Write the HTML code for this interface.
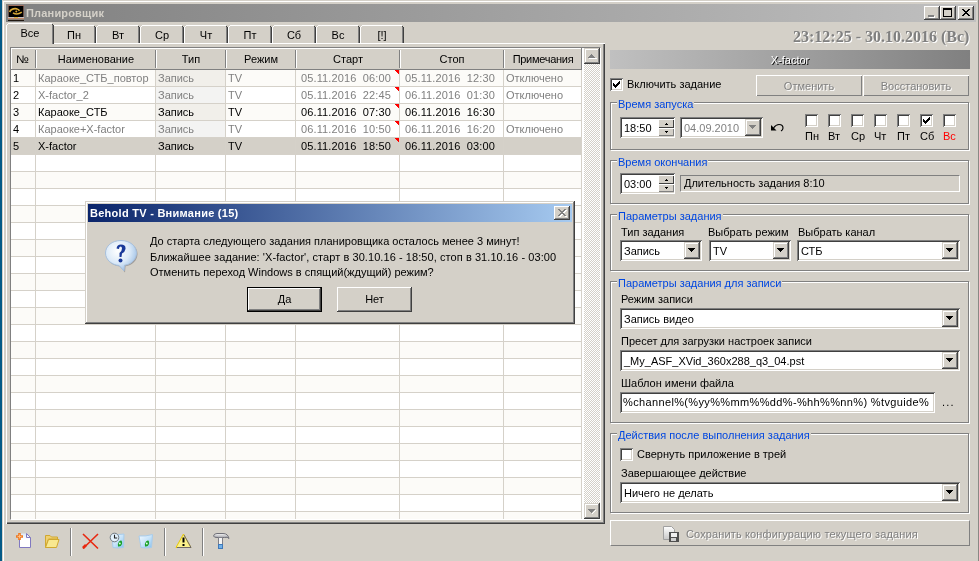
<!DOCTYPE html><html><head><meta charset="utf-8"><style>
*{margin:0;padding:0;box-sizing:border-box}
html,body{width:979px;height:561px;overflow:hidden;background:#d4d0c8;position:relative}
body div{position:absolute}
.t{font:11px/13px "Liberation Sans",sans-serif;white-space:pre;color:#000;will-change:transform}
.b{font-weight:bold}
.g{color:#808080}
.dis{color:#808080;text-shadow:1px 1px 0 #fff}
</style></head><body><div style="left:0px;top:0px;width:2px;height:561px;background:#045a87"></div>
<div style="left:3px;top:1px;width:974px;height:1px;background:#fff"></div>
<div style="left:3px;top:1px;width:1px;height:560px;background:#fff"></div>
<div style="left:978px;top:0px;width:1px;height:561px;background:#8a8884"></div>
<div style="left:6px;top:4px;width:970px;height:18px;background:linear-gradient(to right,#808080,#c0c0c0)"></div>
<svg style="position:absolute;left:8px;top:5px" width="16" height="16" viewBox="0 0 16 16">
<rect x="0" y="0" width="16" height="16" fill="#6a5048"/>
<rect x="0" y="0" width="16" height="1" fill="#a07060"/>
<rect x="1" y="1" width="14" height="11" fill="#000"/>
<rect x="0" y="12" width="16" height="1" fill="#c8c0c0"/>
<rect x="6" y="12" width="4" height="1" fill="#d8b040"/>
<rect x="0" y="13" width="16" height="1" fill="#c08868"/>
<rect x="0" y="14" width="16" height="1" fill="#8a8078"/>
<rect x="0" y="15" width="16" height="1" fill="#201810"/>
<path d="M1.6 7 Q3.5 3.2 8.5 3.8 Q10.5 4.3 11.5 5.8" stroke="#d8a838" stroke-width="1.7" fill="none"/>
<path d="M5 7.8 Q9 10.5 13.8 7.2" stroke="#d8a838" stroke-width="1.6" fill="none"/>
<circle cx="8.3" cy="6.6" r="1" fill="#d8a838"/>
</svg>
<div class="t b" style="left:26px;top:7px;color:#d4d0c8;letter-spacing:0.18px">Планировщик</div>
<div style="left:924px;top:6px;width:16px;height:14px;box-shadow: inset -1px -1px #404040, inset 1px 1px #ffffff, inset -2px -2px #808080; background:#d4d0c8;"></div>
<div style="left:940px;top:6px;width:16px;height:14px;box-shadow: inset -1px -1px #404040, inset 1px 1px #ffffff, inset -2px -2px #808080; background:#d4d0c8;"></div>
<div style="left:958px;top:6px;width:16px;height:14px;box-shadow: inset -1px -1px #404040, inset 1px 1px #ffffff, inset -2px -2px #808080; background:#d4d0c8;"></div>
<div style="left:928px;top:15px;width:6px;height:2px;background:#808080;box-shadow:1px 1px 0 #fff"></div>
<div style="left:943px;top:8px;width:9px;height:9px;border:1px solid #000;border-top-width:2px"></div>
<svg style="position:absolute;left:962px;top:9px" width="10" height="9" shape-rendering="crispEdges"><path d="M0 0h1v1h-1zM1 0h1v1h-1zM6 0h1v1h-1zM7 0h1v1h-1zM1 1h1v1h-1zM2 1h1v1h-1zM5 1h1v1h-1zM6 1h1v1h-1zM2 2h1v1h-1zM3 2h1v1h-1zM4 2h1v1h-1zM5 2h1v1h-1zM3 3h1v1h-1zM4 3h1v1h-1zM2 4h1v1h-1zM3 4h1v1h-1zM4 4h1v1h-1zM5 4h1v1h-1zM1 5h1v1h-1zM2 5h1v1h-1zM5 5h1v1h-1zM6 5h1v1h-1zM0 6h1v1h-1zM1 6h1v1h-1zM6 6h1v1h-1zM7 6h1v1h-1z" fill="#000"/></svg>
<div style="left:6px;top:43px;width:599px;height:481px;box-shadow: inset 1px 1px #ffffff, inset -1px -1px #404040, inset -2px -2px #808080"></div>
<div style="left:54px;top:25px;width:40px;height:1px;background:#fff"></div>
<div style="left:52px;top:27px;width:1px;height:16px;background:#fff"></div>
<div style="left:53px;top:26px;width:1px;height:1px;background:#fff"></div>
<div style="left:95px;top:27px;width:1px;height:16px;background:#404040"></div>
<div style="left:94px;top:26px;width:1px;height:1px;background:#404040"></div>
<div style="left:94px;top:27px;width:1px;height:16px;background:#808080"></div>
<div class="t" style="left:52px;top:29px;width:44px;text-align:center;">Пн</div>
<div style="left:98px;top:25px;width:40px;height:1px;background:#fff"></div>
<div style="left:96px;top:27px;width:1px;height:16px;background:#fff"></div>
<div style="left:97px;top:26px;width:1px;height:1px;background:#fff"></div>
<div style="left:139px;top:27px;width:1px;height:16px;background:#404040"></div>
<div style="left:138px;top:26px;width:1px;height:1px;background:#404040"></div>
<div style="left:138px;top:27px;width:1px;height:16px;background:#808080"></div>
<div class="t" style="left:96px;top:29px;width:44px;text-align:center;">Вт</div>
<div style="left:142px;top:25px;width:40px;height:1px;background:#fff"></div>
<div style="left:140px;top:27px;width:1px;height:16px;background:#fff"></div>
<div style="left:141px;top:26px;width:1px;height:1px;background:#fff"></div>
<div style="left:183px;top:27px;width:1px;height:16px;background:#404040"></div>
<div style="left:182px;top:26px;width:1px;height:1px;background:#404040"></div>
<div style="left:182px;top:27px;width:1px;height:16px;background:#808080"></div>
<div class="t" style="left:140px;top:29px;width:44px;text-align:center;">Ср</div>
<div style="left:186px;top:25px;width:40px;height:1px;background:#fff"></div>
<div style="left:184px;top:27px;width:1px;height:16px;background:#fff"></div>
<div style="left:185px;top:26px;width:1px;height:1px;background:#fff"></div>
<div style="left:227px;top:27px;width:1px;height:16px;background:#404040"></div>
<div style="left:226px;top:26px;width:1px;height:1px;background:#404040"></div>
<div style="left:226px;top:27px;width:1px;height:16px;background:#808080"></div>
<div class="t" style="left:184px;top:29px;width:44px;text-align:center;">Чт</div>
<div style="left:230px;top:25px;width:40px;height:1px;background:#fff"></div>
<div style="left:228px;top:27px;width:1px;height:16px;background:#fff"></div>
<div style="left:229px;top:26px;width:1px;height:1px;background:#fff"></div>
<div style="left:271px;top:27px;width:1px;height:16px;background:#404040"></div>
<div style="left:270px;top:26px;width:1px;height:1px;background:#404040"></div>
<div style="left:270px;top:27px;width:1px;height:16px;background:#808080"></div>
<div class="t" style="left:228px;top:29px;width:44px;text-align:center;">Пт</div>
<div style="left:274px;top:25px;width:40px;height:1px;background:#fff"></div>
<div style="left:272px;top:27px;width:1px;height:16px;background:#fff"></div>
<div style="left:273px;top:26px;width:1px;height:1px;background:#fff"></div>
<div style="left:315px;top:27px;width:1px;height:16px;background:#404040"></div>
<div style="left:314px;top:26px;width:1px;height:1px;background:#404040"></div>
<div style="left:314px;top:27px;width:1px;height:16px;background:#808080"></div>
<div class="t" style="left:272px;top:29px;width:44px;text-align:center;">Сб</div>
<div style="left:318px;top:25px;width:40px;height:1px;background:#fff"></div>
<div style="left:316px;top:27px;width:1px;height:16px;background:#fff"></div>
<div style="left:317px;top:26px;width:1px;height:1px;background:#fff"></div>
<div style="left:359px;top:27px;width:1px;height:16px;background:#404040"></div>
<div style="left:358px;top:26px;width:1px;height:1px;background:#404040"></div>
<div style="left:358px;top:27px;width:1px;height:16px;background:#808080"></div>
<div class="t" style="left:316px;top:29px;width:44px;text-align:center;">Вс</div>
<div style="left:362px;top:25px;width:40px;height:1px;background:#fff"></div>
<div style="left:360px;top:27px;width:1px;height:16px;background:#fff"></div>
<div style="left:361px;top:26px;width:1px;height:1px;background:#fff"></div>
<div style="left:403px;top:27px;width:1px;height:16px;background:#404040"></div>
<div style="left:402px;top:26px;width:1px;height:1px;background:#404040"></div>
<div style="left:402px;top:27px;width:1px;height:16px;background:#808080"></div>
<div class="t" style="left:360px;top:29px;width:44px;text-align:center;">[!]</div>
<div style="left:6px;top:23px;width:48px;height:21px;background:#d4d0c8"></div>
<div style="left:8px;top:23px;width:44px;height:1px;background:#fff"></div>
<div style="left:6px;top:25px;width:1px;height:19px;background:#fff"></div>
<div style="left:7px;top:24px;width:1px;height:1px;background:#fff"></div>
<div style="left:53px;top:25px;width:1px;height:19px;background:#404040"></div>
<div style="left:52px;top:24px;width:1px;height:1px;background:#404040"></div>
<div style="left:52px;top:25px;width:1px;height:19px;background:#808080"></div>
<div class="t" style="left:6px;top:27px;width:48px;text-align:center;">Все</div>
<div style="left:10px;top:47px;width:591px;height:473px;background:#fff;border-top:1px solid #808080;border-left:1px solid #808080;border-bottom:1px solid #fff;border-right:1px solid #fff"></div>
<div style="left:11px;top:70px;width:571px;height:16px;background:#fcfbf8"></div>
<div style="left:156px;top:70px;width:69px;height:16px;background:#f1efea"></div>
<div style="left:11px;top:86px;width:571px;height:1px;background:#d5d1c9"></div>
<div style="left:11px;top:87px;width:571px;height:16px;background:#ffffff"></div>
<div style="left:156px;top:87px;width:69px;height:16px;background:#f3f3f2"></div>
<div style="left:11px;top:103px;width:571px;height:1px;background:#d5d1c9"></div>
<div style="left:11px;top:104px;width:571px;height:16px;background:#fcfbf8"></div>
<div style="left:156px;top:104px;width:69px;height:16px;background:#f1efea"></div>
<div style="left:11px;top:120px;width:571px;height:1px;background:#d5d1c9"></div>
<div style="left:11px;top:121px;width:571px;height:16px;background:#ffffff"></div>
<div style="left:156px;top:121px;width:69px;height:16px;background:#f3f3f2"></div>
<div style="left:11px;top:137px;width:571px;height:1px;background:#d5d1c9"></div>
<div style="left:11px;top:138px;width:571px;height:16px;background:#d4d0c8"></div>
<div style="left:11px;top:154px;width:571px;height:1px;background:#d5d1c9"></div>
<div style="left:11px;top:155px;width:571px;height:16px;background:#ffffff"></div>
<div style="left:11px;top:171px;width:571px;height:1px;background:#d5d1c9"></div>
<div style="left:11px;top:172px;width:571px;height:16px;background:#fcfbf8"></div>
<div style="left:11px;top:188px;width:571px;height:1px;background:#d5d1c9"></div>
<div style="left:11px;top:189px;width:571px;height:16px;background:#ffffff"></div>
<div style="left:11px;top:205px;width:571px;height:1px;background:#d5d1c9"></div>
<div style="left:11px;top:206px;width:571px;height:16px;background:#fcfbf8"></div>
<div style="left:11px;top:222px;width:571px;height:1px;background:#d5d1c9"></div>
<div style="left:11px;top:223px;width:571px;height:16px;background:#ffffff"></div>
<div style="left:11px;top:239px;width:571px;height:1px;background:#d5d1c9"></div>
<div style="left:11px;top:240px;width:571px;height:16px;background:#fcfbf8"></div>
<div style="left:11px;top:256px;width:571px;height:1px;background:#d5d1c9"></div>
<div style="left:11px;top:257px;width:571px;height:16px;background:#ffffff"></div>
<div style="left:11px;top:273px;width:571px;height:1px;background:#d5d1c9"></div>
<div style="left:11px;top:274px;width:571px;height:16px;background:#fcfbf8"></div>
<div style="left:11px;top:290px;width:571px;height:1px;background:#d5d1c9"></div>
<div style="left:11px;top:291px;width:571px;height:16px;background:#ffffff"></div>
<div style="left:11px;top:307px;width:571px;height:1px;background:#d5d1c9"></div>
<div style="left:11px;top:308px;width:571px;height:16px;background:#fcfbf8"></div>
<div style="left:11px;top:324px;width:571px;height:1px;background:#d5d1c9"></div>
<div style="left:11px;top:325px;width:571px;height:16px;background:#ffffff"></div>
<div style="left:11px;top:341px;width:571px;height:1px;background:#d5d1c9"></div>
<div style="left:11px;top:342px;width:571px;height:16px;background:#fcfbf8"></div>
<div style="left:11px;top:358px;width:571px;height:1px;background:#d5d1c9"></div>
<div style="left:11px;top:359px;width:571px;height:16px;background:#ffffff"></div>
<div style="left:11px;top:375px;width:571px;height:1px;background:#d5d1c9"></div>
<div style="left:11px;top:376px;width:571px;height:16px;background:#fcfbf8"></div>
<div style="left:11px;top:392px;width:571px;height:1px;background:#d5d1c9"></div>
<div style="left:11px;top:393px;width:571px;height:16px;background:#ffffff"></div>
<div style="left:11px;top:409px;width:571px;height:1px;background:#d5d1c9"></div>
<div style="left:11px;top:410px;width:571px;height:16px;background:#fcfbf8"></div>
<div style="left:11px;top:426px;width:571px;height:1px;background:#d5d1c9"></div>
<div style="left:11px;top:427px;width:571px;height:16px;background:#ffffff"></div>
<div style="left:11px;top:443px;width:571px;height:1px;background:#d5d1c9"></div>
<div style="left:11px;top:444px;width:571px;height:16px;background:#fcfbf8"></div>
<div style="left:11px;top:460px;width:571px;height:1px;background:#d5d1c9"></div>
<div style="left:11px;top:461px;width:571px;height:16px;background:#ffffff"></div>
<div style="left:11px;top:477px;width:571px;height:1px;background:#d5d1c9"></div>
<div style="left:11px;top:478px;width:571px;height:16px;background:#fcfbf8"></div>
<div style="left:11px;top:494px;width:571px;height:1px;background:#d5d1c9"></div>
<div style="left:11px;top:495px;width:571px;height:16px;background:#ffffff"></div>
<div style="left:11px;top:511px;width:571px;height:1px;background:#d5d1c9"></div>
<div style="left:11px;top:512px;width:571px;height:7px;background:#fcfbf8"></div>
<div style="left:35px;top:70px;width:1px;height:449px;background:#d5d1c9"></div>
<div style="left:155px;top:70px;width:1px;height:449px;background:#d5d1c9"></div>
<div style="left:225px;top:70px;width:1px;height:449px;background:#d5d1c9"></div>
<div style="left:295px;top:70px;width:1px;height:449px;background:#d5d1c9"></div>
<div style="left:399px;top:70px;width:1px;height:449px;background:#d5d1c9"></div>
<div style="left:503px;top:70px;width:1px;height:449px;background:#d5d1c9"></div>
<div style="left:581px;top:70px;width:1px;height:449px;background:#d5d1c9"></div>
<div style="left:11px;top:48px;width:571px;height:22px;background:#d4d0c8"></div>
<div style="left:11px;top:48px;width:571px;height:1px;background:#fff"></div>
<div style="left:11px;top:48px;width:1px;height:21px;background:#fff"></div>
<div style="left:11px;top:69px;width:571px;height:1px;background:#808080"></div>
<div style="left:35px;top:50px;width:1px;height:18px;background:#808080"></div>
<div style="left:36px;top:50px;width:1px;height:18px;background:#fff"></div>
<div class="t" style="left:16px;top:53px;transform:scaleX(1.1);transform-origin:0 0">№</div>
<div style="left:155px;top:50px;width:1px;height:18px;background:#808080"></div>
<div style="left:156px;top:50px;width:1px;height:18px;background:#fff"></div>
<div class="t" style="left:36px;top:53px;width:120px;text-align:center;">Наименование</div>
<div style="left:225px;top:50px;width:1px;height:18px;background:#808080"></div>
<div style="left:226px;top:50px;width:1px;height:18px;background:#fff"></div>
<div class="t" style="left:156px;top:53px;width:70px;text-align:center;">Тип</div>
<div style="left:295px;top:50px;width:1px;height:18px;background:#808080"></div>
<div style="left:296px;top:50px;width:1px;height:18px;background:#fff"></div>
<div class="t" style="left:226px;top:53px;width:70px;text-align:center;">Режим</div>
<div style="left:399px;top:50px;width:1px;height:18px;background:#808080"></div>
<div style="left:400px;top:50px;width:1px;height:18px;background:#fff"></div>
<div class="t" style="left:296px;top:53px;width:104px;text-align:center;">Старт</div>
<div style="left:503px;top:50px;width:1px;height:18px;background:#808080"></div>
<div style="left:504px;top:50px;width:1px;height:18px;background:#fff"></div>
<div class="t" style="left:400px;top:53px;width:104px;text-align:center;">Стоп</div>
<div style="left:581px;top:48px;width:1px;height:21px;background:#808080"></div>
<div class="t" style="left:504px;top:53px;width:78px;text-align:center;letter-spacing:-0.28px">Примечания</div>
<div class="t" style="left:13px;top:72px;">1</div>
<div class="t" style="left:38px;top:72px;color:#808080">Караоке_СТБ_повтор</div>
<div class="t" style="left:158px;top:72px;color:#808080">Запись</div>
<div class="t" style="left:228px;top:72px;color:#808080">TV</div>
<div class="t" style="left:301px;top:72px;color:#808080;letter-spacing:0.12px">05.11.2016  06:00</div>
<div class="t" style="left:405px;top:72px;color:#808080;letter-spacing:0.12px">05.11.2016  12:30</div>
<div class="t" style="left:506px;top:72px;color:#808080">Отключено</div>
<svg style="position:absolute;left:394px;top:70px" width="5" height="5"><path d="M0 0H5V5Z" fill="#f00" shape-rendering="crispEdges"/></svg>
<div class="t" style="left:13px;top:89px;">2</div>
<div class="t" style="left:38px;top:89px;color:#808080">X-factor_2</div>
<div class="t" style="left:158px;top:89px;color:#808080">Запись</div>
<div class="t" style="left:228px;top:89px;color:#808080">TV</div>
<div class="t" style="left:301px;top:89px;color:#808080;letter-spacing:0.12px">05.11.2016  22:45</div>
<div class="t" style="left:405px;top:89px;color:#808080;letter-spacing:0.12px">06.11.2016  01:30</div>
<div class="t" style="left:506px;top:89px;color:#808080">Отключено</div>
<svg style="position:absolute;left:394px;top:87px" width="5" height="5"><path d="M0 0H5V5Z" fill="#f00" shape-rendering="crispEdges"/></svg>
<div class="t" style="left:13px;top:106px;">3</div>
<div class="t" style="left:38px;top:106px;">Караоке_СТБ</div>
<div class="t" style="left:158px;top:106px;">Запись</div>
<div class="t" style="left:228px;top:106px;">TV</div>
<div class="t" style="left:301px;top:106px;;letter-spacing:0.12px">06.11.2016  07:30</div>
<div class="t" style="left:405px;top:106px;;letter-spacing:0.12px">06.11.2016  16:30</div>
<div class="t" style="left:506px;top:106px;"></div>
<svg style="position:absolute;left:394px;top:104px" width="5" height="5"><path d="M0 0H5V5Z" fill="#f00" shape-rendering="crispEdges"/></svg>
<div class="t" style="left:13px;top:123px;">4</div>
<div class="t" style="left:38px;top:123px;color:#808080">Караоке+X-factor</div>
<div class="t" style="left:158px;top:123px;color:#808080">Запись</div>
<div class="t" style="left:228px;top:123px;color:#808080">TV</div>
<div class="t" style="left:301px;top:123px;color:#808080;letter-spacing:0.12px">06.11.2016  10:50</div>
<div class="t" style="left:405px;top:123px;color:#808080;letter-spacing:0.12px">06.11.2016  16:20</div>
<div class="t" style="left:506px;top:123px;color:#808080">Отключено</div>
<svg style="position:absolute;left:394px;top:121px" width="5" height="5"><path d="M0 0H5V5Z" fill="#f00" shape-rendering="crispEdges"/></svg>
<div class="t" style="left:13px;top:140px;">5</div>
<div class="t" style="left:38px;top:140px;">X-factor</div>
<div class="t" style="left:158px;top:140px;">Запись</div>
<div class="t" style="left:228px;top:140px;">TV</div>
<div class="t" style="left:301px;top:140px;;letter-spacing:0.12px">05.11.2016  18:50</div>
<div class="t" style="left:405px;top:140px;;letter-spacing:0.12px">06.11.2016  03:00</div>
<div class="t" style="left:506px;top:140px;"></div>
<svg style="position:absolute;left:394px;top:138px" width="5" height="5"><path d="M0 0H5V5Z" fill="#f00" shape-rendering="crispEdges"/></svg>
<div style="left:584px;top:48px;width:16px;height:471px;background-color:#fff;background-image:repeating-conic-gradient(#d4d0c8 0 25%,#fff 0 50%);background-size:2px 2px"></div>
<div style="left:584px;top:48px;width:16px;height:16px;box-shadow: inset -1px -1px #404040, inset 1px 1px #d4d0c8, inset -2px -2px #808080, inset 2px 2px #ffffff; background:#d4d0c8;"></div>
<div style="left:584px;top:503px;width:16px;height:16px;box-shadow: inset -1px -1px #404040, inset 1px 1px #d4d0c8, inset -2px -2px #808080, inset 2px 2px #ffffff; background:#d4d0c8;"></div>
<svg style="position:absolute;left:584px;top:48px" width="16" height="16" shape-rendering="crispEdges"><path d="M5 10h8v1h-8z" fill="#fff"/><path d="M7 6h1v1h-1zM6 7h3v1h-3zM5 8h5v1h-5zM4 9h7v1h-7z" fill="#808080"/></svg>
<svg style="position:absolute;left:584px;top:503px" width="16" height="16" shape-rendering="crispEdges"><path d="M11 7h1v1h-1zM10 8h1v1h-1zM9 9h1v1h-1zM8 10h1v1h-1z" fill="#fff"/><path d="M4 6h7v1h-7zM5 7h5v1h-5zM6 8h3v1h-3zM7 9h1v1h-1z" fill="#808080"/></svg>
<svg style="position:absolute;left:15px;top:532px" width="18" height="18" viewBox="0 0 18 18">
<defs><linearGradient id="pg" x1="0" y1="0" x2="0" y2="1"><stop offset="0" stop-color="#d8e8f8"/><stop offset="0.4" stop-color="#ffffff"/></linearGradient></defs>
<path d="M4.5 1.5 H11.5 L15.5 5.5 V15.5 H4.5 Z" fill="url(#pg)" stroke="none"/>
<path d="M4.5 6 V15.5 H15.5 V5.5 L11.5 1.5 V5.5 H15.5" fill="none" stroke="#8078c0"/>
<path d="M0 1 H18 V2 H0Z" fill="none"/>
<path d="M4.5 1 V8 M1 4.5 H8" stroke="#f07820" stroke-width="2.6"/>
<path d="M4.5 2.5 V6.5 M2.5 4.5 H6.5" stroke="#ffc890" stroke-width="0.8"/>
</svg>
<svg style="position:absolute;left:44px;top:534px" width="17" height="15" viewBox="0 0 17 15">
<path d="M1.5 1.5 H6 L7.5 3 H13.5 V5 H4.5 L1.5 13.5 Z" fill="#f0d070" stroke="#d0a830"/>
<path d="M1.5 13.5 L4.5 5.5 H15 L12.5 13.5 Z" fill="#f8e890" stroke="#d0a830"/>
</svg>
<div style="left:70px;top:528px;width:1px;height:28px;background:#808080"></div>
<div style="left:71px;top:528px;width:1px;height:28px;background:#fff"></div>
<svg style="position:absolute;left:81px;top:533px" width="18" height="17" viewBox="0 0 18 17">
<path d="M2 1 L17 15.5 M17 1 L2 15.5" stroke="#e82810" stroke-width="1.6"/>
<path d="M2 15 L5 12" stroke="#e82810" stroke-width="2.6"/>
</svg>
<svg style="position:absolute;left:109px;top:532px" width="17" height="17" viewBox="0 0 17 17">
<defs><linearGradient id="bg1" x1="0" y1="0" x2="1" y2="1"><stop offset="0" stop-color="#f4faff"/><stop offset="0.5" stop-color="#c8e4fa"/><stop offset="1" stop-color="#88c0ec"/></linearGradient></defs>
<path d="M3 3.5 Q8 2.5 15 2 L14.5 15.5 Q9 16.5 4 15.5 Z" fill="url(#bg1)" stroke="#a8cceb"/>
<circle cx="5.5" cy="5.5" r="4.3" fill="#e4f2fc" stroke="#707880"/>
<path d="M5.5 2.8 V6 H8.2" stroke="#202020" fill="none" stroke-width="1.1"/>
<path d="M10 9.5 Q13.5 6.5 13 12 Q12 15 9 14.5 Q8.5 11.5 10 9.5Z" fill="#18a028"/>
<circle cx="10.8" cy="11.5" r="0.9" fill="#e8ffe8"/>
</svg>
<svg style="position:absolute;left:137px;top:533px" width="17" height="16" viewBox="0 0 17 16">
<defs><linearGradient id="bg2" x1="0" y1="0" x2="1" y2="1"><stop offset="0" stop-color="#f4faff"/><stop offset="0.5" stop-color="#c8e4fa"/><stop offset="1" stop-color="#88c0ec"/></linearGradient></defs>
<path d="M2 3 Q9 3.5 15.5 1.5 L14.5 14.5 Q9 15.5 4 14.5 Z" fill="url(#bg2)" stroke="#a8cceb"/>
<path d="M9 8.5 Q12.5 5.5 12 11 Q11 14 8 13.5 Q7.5 10.5 9 8.5Z" fill="#18a028"/>
<circle cx="9.8" cy="10.5" r="0.9" fill="#e8ffe8"/>
</svg>
<div style="left:164px;top:528px;width:1px;height:28px;background:#808080"></div>
<div style="left:165px;top:528px;width:1px;height:28px;background:#fff"></div>
<svg style="position:absolute;left:175px;top:533px" width="17" height="16" viewBox="0 0 17 16">
<path d="M8.5 1 L16 14.5 H1 Z" fill="#faf08a" stroke="#e8c800" stroke-linejoin="round"/>
<path d="M9 2 L16 14.5 H2" fill="none" stroke="#505080" stroke-width="0.8"/>
<path d="M8.5 4.5 V9.5" stroke="#000" stroke-width="2"/>
<rect x="7.5" y="11" width="2" height="2" fill="#000"/>
</svg>
<div style="left:202px;top:528px;width:1px;height:28px;background:#808080"></div>
<div style="left:203px;top:528px;width:1px;height:28px;background:#fff"></div>
<svg style="position:absolute;left:212px;top:532px" width="18" height="18" viewBox="0 0 18 18">
<defs><linearGradient id="hg" x1="0" y1="0" x2="0" y2="1"><stop offset="0" stop-color="#f8f8f8"/><stop offset="1" stop-color="#909098"/></linearGradient></defs>
<path d="M1.5 4 Q2 1.5 5 1.5 H11 Q16 1.5 17 6.5 Q15.5 4.5 12.5 5.5 H5 Q2 5.5 1.5 4Z" fill="url(#hg)" stroke="#707078"/>
<rect x="6.5" y="5.5" width="4" height="7" fill="#f4f4f4" stroke="#808088"/>
<rect x="6.5" y="12.5" width="4" height="4" fill="#70b0e8" stroke="#4078b8"/>
</svg>
<div class="t" style="left:793px;top:28px;font:bold 16px/18px Liberation Serif,serif;color:#808080;text-shadow:1px 1px 0 #fff">23:12:25 - 30.10.2016 (Вс)</div>
<div style="left:610px;top:50px;width:360px;height:19px;background:linear-gradient(to right,#c0c0c0,#808080)"></div>
<div class="t" style="left:610px;top:54px;width:360px;text-align:center;color:#fff;text-shadow:1px 1px 0 #000">X-factor</div>
<div style="left:610px;top:78px;width:13px;height:13px;background:#fff;box-shadow: inset 1px 1px #808080, inset -1px -1px #ffffff, inset 2px 2px #404040, inset -2px -2px #d4d0c8;"></div>
<svg style="position:absolute;left:610px;top:78px" width="13" height="13"><path d="M3 5 V7 L5 9 L10 4 V2 L5 7 Z" fill="#000" shape-rendering="crispEdges"/><path d="M3 5h1v3h-1zM4 6h1v3h-1zM5 7h1v3h-1zM6 6h1v3h-1zM7 5h1v3h-1zM8 4h1v3h-1zM9 3h1v3h-1z" fill="#000" shape-rendering="crispEdges"/></svg>
<div class="t" style="left:627px;top:78px;">Включить задание</div>
<div style="left:756px;top:75px;width:106px;height:21px;background:#d4d0c8;box-shadow: inset 1px 1px #ffffff, inset -1px -1px #808080"></div>
<div class="t dis" style="left:756px;top:80px;width:106px;text-align:center">Отменить</div>
<div style="left:863px;top:75px;width:106px;height:21px;background:#d4d0c8;box-shadow: inset 1px 1px #ffffff, inset -1px -1px #808080"></div>
<div class="t dis" style="left:863px;top:80px;width:106px;text-align:center">Восстановить</div>
<div style="left:611px;top:103px;width:359px;height:48px;border:1px solid #fff"></div>
<div style="left:610px;top:102px;width:359px;height:48px;border:1px solid #808080"></div>
<div class="t" style="left:617px;top:98px;padding:0 1px;background:#d4d0c8;color:#0046e0">Время запуска</div>
<div style="left:620px;top:117px;width:55px;height:21px;background:#fff;box-shadow: inset 1px 1px #808080, inset -1px -1px #ffffff, inset 2px 2px #404040, inset -2px -2px #d4d0c8;"></div>
<div class="t" style="left:624px;top:122px;">18:50</div>
<div style="left:658px;top:119px;width:16px;height:9px;background:#d4d0c8;box-shadow: inset 1px 1px #ffffff, inset -1px -1px #404040"></div>
<div style="left:658px;top:128px;width:16px;height:8px;background:#d4d0c8;box-shadow: inset 1px 1px #ffffff, inset -1px -1px #808080"></div>
<svg style="position:absolute;left:658px;top:119px" width="16" height="17"><path d="M8 4h1v1h-1zM7 5h3v1h-3z" fill="#000" shape-rendering="crispEdges"/><path d="M7 12h3v1h-3zM8 13h1v1h-1z" fill="#000" shape-rendering="crispEdges"/></svg>
<div style="left:680px;top:117px;width:83px;height:21px;background:#fff;box-shadow: inset 1px 1px #808080, inset -1px -1px #ffffff, inset 2px 2px #404040, inset -2px -2px #d4d0c8;"></div>
<div class="t" style="left:684px;top:122px;color:#808080">04.09.2010</div>
<div style="left:745px;top:119px;width:16px;height:17px;box-shadow: inset -1px -1px #404040, inset 1px 1px #d4d0c8, inset -2px -2px #808080, inset 2px 2px #ffffff; background:#d4d0c8;"></div>
<svg style="position:absolute;left:745px;top:119px" width="16" height="17"><path d="M4 6h7v1h-7zM5 7h5v1h-5zM6 8h3v1h-3zM7 9h1v1h-1z" fill="#808080" shape-rendering="crispEdges"/></svg>
<svg style="position:absolute;left:769px;top:122px" width="16" height="12"><path d="M2 3 V8.5 H7.5 Z" fill="#000"/><path d="M4.5 6 Q7 2.5 10 2.5 Q14 2.5 14 6 Q14 8 12 9" stroke="#000" stroke-width="1.15" fill="none"/></svg>
<div style="left:805px;top:114px;width:13px;height:13px;background:#fff;box-shadow: inset 1px 1px #808080, inset -1px -1px #ffffff, inset 2px 2px #404040, inset -2px -2px #d4d0c8;"></div>
<div class="t" style="left:805px;top:130px;">Пн</div>
<div style="left:828px;top:114px;width:13px;height:13px;background:#fff;box-shadow: inset 1px 1px #808080, inset -1px -1px #ffffff, inset 2px 2px #404040, inset -2px -2px #d4d0c8;"></div>
<div class="t" style="left:828px;top:130px;">Вт</div>
<div style="left:851px;top:114px;width:13px;height:13px;background:#fff;box-shadow: inset 1px 1px #808080, inset -1px -1px #ffffff, inset 2px 2px #404040, inset -2px -2px #d4d0c8;"></div>
<div class="t" style="left:851px;top:130px;">Ср</div>
<div style="left:874px;top:114px;width:13px;height:13px;background:#fff;box-shadow: inset 1px 1px #808080, inset -1px -1px #ffffff, inset 2px 2px #404040, inset -2px -2px #d4d0c8;"></div>
<div class="t" style="left:874px;top:130px;">Чт</div>
<div style="left:897px;top:114px;width:13px;height:13px;background:#fff;box-shadow: inset 1px 1px #808080, inset -1px -1px #ffffff, inset 2px 2px #404040, inset -2px -2px #d4d0c8;"></div>
<div class="t" style="left:897px;top:130px;">Пт</div>
<div style="left:920px;top:114px;width:13px;height:13px;background:#fff;box-shadow: inset 1px 1px #808080, inset -1px -1px #ffffff, inset 2px 2px #404040, inset -2px -2px #d4d0c8;"></div>
<svg style="position:absolute;left:920px;top:114px" width="13" height="13"><path d="M3 5 V7 L5 9 L10 4 V2 L5 7 Z" fill="#000" shape-rendering="crispEdges"/><path d="M3 5h1v3h-1zM4 6h1v3h-1zM5 7h1v3h-1zM6 6h1v3h-1zM7 5h1v3h-1zM8 4h1v3h-1zM9 3h1v3h-1z" fill="#000" shape-rendering="crispEdges"/></svg>
<div class="t" style="left:920px;top:130px;">Сб</div>
<div style="left:943px;top:114px;width:13px;height:13px;background:#fff;box-shadow: inset 1px 1px #808080, inset -1px -1px #ffffff, inset 2px 2px #404040, inset -2px -2px #d4d0c8;"></div>
<div class="t" style="left:943px;top:130px;color:#f00">Вс</div>
<div style="left:611px;top:161px;width:359px;height:44px;border:1px solid #fff"></div>
<div style="left:610px;top:160px;width:359px;height:44px;border:1px solid #808080"></div>
<div class="t" style="left:617px;top:156px;padding:0 1px;background:#d4d0c8;color:#0046e0">Время окончания</div>
<div style="left:620px;top:173px;width:55px;height:21px;background:#fff;box-shadow: inset 1px 1px #808080, inset -1px -1px #ffffff, inset 2px 2px #404040, inset -2px -2px #d4d0c8;"></div>
<div class="t" style="left:624px;top:178px;">03:00</div>
<div style="left:658px;top:175px;width:16px;height:9px;background:#d4d0c8;box-shadow: inset 1px 1px #ffffff, inset -1px -1px #404040"></div>
<div style="left:658px;top:184px;width:16px;height:8px;background:#d4d0c8;box-shadow: inset 1px 1px #ffffff, inset -1px -1px #808080"></div>
<svg style="position:absolute;left:658px;top:175px" width="16" height="17"><path d="M8 4h1v1h-1zM7 5h3v1h-3z" fill="#000" shape-rendering="crispEdges"/><path d="M7 12h3v1h-3zM8 13h1v1h-1z" fill="#000" shape-rendering="crispEdges"/></svg>
<div style="left:680px;top:175px;width:280px;height:17px;border-top:1px solid #808080;border-left:1px solid #808080;border-bottom:1px solid #fff;border-right:1px solid #fff"></div>
<div class="t" style="left:684px;top:177px;">Длительность задания 8:10</div>
<div style="left:611px;top:215px;width:359px;height:57px;border:1px solid #fff"></div>
<div style="left:610px;top:214px;width:359px;height:57px;border:1px solid #808080"></div>
<div class="t" style="left:617px;top:210px;padding:0 1px;background:#d4d0c8;color:#0046e0">Параметры задания</div>
<div class="t" style="left:621px;top:226px;">Тип задания</div>
<div class="t" style="left:708px;top:226px;">Выбрать режим</div>
<div class="t" style="left:798px;top:226px;">Выбрать канал</div>
<div style="left:620px;top:240px;width:82px;height:21px;background:#fff;box-shadow: inset 1px 1px #808080, inset -1px -1px #ffffff, inset 2px 2px #404040, inset -2px -2px #d4d0c8;"></div>
<div class="t" style="left:624px;top:245px;color:#000">Запись</div>
<div style="left:684px;top:242px;width:16px;height:17px;box-shadow: inset -1px -1px #404040, inset 1px 1px #d4d0c8, inset -2px -2px #808080, inset 2px 2px #ffffff; background:#d4d0c8;"></div>
<svg style="position:absolute;left:684px;top:242px" width="16" height="17"><path d="M4 6h7v1h-7zM5 7h5v1h-5zM6 8h3v1h-3zM7 9h1v1h-1z" fill="#000" shape-rendering="crispEdges"/></svg>
<div style="left:709px;top:240px;width:82px;height:21px;background:#fff;box-shadow: inset 1px 1px #808080, inset -1px -1px #ffffff, inset 2px 2px #404040, inset -2px -2px #d4d0c8;"></div>
<div class="t" style="left:713px;top:245px;color:#000">TV</div>
<div style="left:773px;top:242px;width:16px;height:17px;box-shadow: inset -1px -1px #404040, inset 1px 1px #d4d0c8, inset -2px -2px #808080, inset 2px 2px #ffffff; background:#d4d0c8;"></div>
<svg style="position:absolute;left:773px;top:242px" width="16" height="17"><path d="M4 6h7v1h-7zM5 7h5v1h-5zM6 8h3v1h-3zM7 9h1v1h-1z" fill="#000" shape-rendering="crispEdges"/></svg>
<div style="left:797px;top:240px;width:163px;height:21px;background:#fff;box-shadow: inset 1px 1px #808080, inset -1px -1px #ffffff, inset 2px 2px #404040, inset -2px -2px #d4d0c8;"></div>
<div class="t" style="left:801px;top:245px;color:#000">СТБ</div>
<div style="left:942px;top:242px;width:16px;height:17px;box-shadow: inset -1px -1px #404040, inset 1px 1px #d4d0c8, inset -2px -2px #808080, inset 2px 2px #ffffff; background:#d4d0c8;"></div>
<svg style="position:absolute;left:942px;top:242px" width="16" height="17"><path d="M4 6h7v1h-7zM5 7h5v1h-5zM6 8h3v1h-3zM7 9h1v1h-1z" fill="#000" shape-rendering="crispEdges"/></svg>
<div style="left:611px;top:282px;width:359px;height:142px;border:1px solid #fff"></div>
<div style="left:610px;top:281px;width:359px;height:142px;border:1px solid #808080"></div>
<div class="t" style="left:617px;top:277px;padding:0 1px;background:#d4d0c8;color:#0046e0">Параметры задания для записи</div>
<div class="t" style="left:621px;top:293px;">Режим записи</div>
<div style="left:620px;top:308px;width:340px;height:21px;background:#fff;box-shadow: inset 1px 1px #808080, inset -1px -1px #ffffff, inset 2px 2px #404040, inset -2px -2px #d4d0c8;"></div>
<div class="t" style="left:624px;top:313px;color:#000">Запись видео</div>
<div style="left:942px;top:310px;width:16px;height:17px;box-shadow: inset -1px -1px #404040, inset 1px 1px #d4d0c8, inset -2px -2px #808080, inset 2px 2px #ffffff; background:#d4d0c8;"></div>
<svg style="position:absolute;left:942px;top:310px" width="16" height="17"><path d="M4 6h7v1h-7zM5 7h5v1h-5zM6 8h3v1h-3zM7 9h1v1h-1z" fill="#000" shape-rendering="crispEdges"/></svg>
<div class="t" style="left:621px;top:335px;">Пресет для загрузки настроек записи</div>
<div style="left:620px;top:350px;width:340px;height:21px;background:#fff;box-shadow: inset 1px 1px #808080, inset -1px -1px #ffffff, inset 2px 2px #404040, inset -2px -2px #d4d0c8;"></div>
<div class="t" style="left:624px;top:355px;color:#000">_My_ASF_XVid_360x288_q3_04.pst</div>
<div style="left:942px;top:352px;width:16px;height:17px;box-shadow: inset -1px -1px #404040, inset 1px 1px #d4d0c8, inset -2px -2px #808080, inset 2px 2px #ffffff; background:#d4d0c8;"></div>
<svg style="position:absolute;left:942px;top:352px" width="16" height="17"><path d="M4 6h7v1h-7zM5 7h5v1h-5zM6 8h3v1h-3zM7 9h1v1h-1z" fill="#000" shape-rendering="crispEdges"/></svg>
<div class="t" style="left:621px;top:377px;">Шаблон имени файла</div>
<div style="left:620px;top:392px;width:315px;height:21px;background:#fff;box-shadow: inset 1px 1px #808080, inset -1px -1px #ffffff, inset 2px 2px #404040, inset -2px -2px #d4d0c8;"></div>
<div class="t" style="left:623px;top:396px;letter-spacing:0.36px">%channel%(%yy%%mm%%dd%-%hh%%nn%) %tvguide%</div>
<div class="t" style="left:942px;top:396px;letter-spacing:1.2px">...</div>
<div style="left:611px;top:434px;width:359px;height:80px;border:1px solid #fff"></div>
<div style="left:610px;top:433px;width:359px;height:80px;border:1px solid #808080"></div>
<div class="t" style="left:617px;top:429px;padding:0 1px;background:#d4d0c8;color:#0046e0">Действия после выполнения задания</div>
<div style="left:620px;top:448px;width:13px;height:13px;background:#fff;box-shadow: inset 1px 1px #808080, inset -1px -1px #ffffff, inset 2px 2px #404040, inset -2px -2px #d4d0c8;"></div>
<div class="t" style="left:637px;top:448px;">Свернуть приложение в трей</div>
<div class="t" style="left:621px;top:467px;">Завершающее действие</div>
<div style="left:620px;top:482px;width:340px;height:21px;background:#fff;box-shadow: inset 1px 1px #808080, inset -1px -1px #ffffff, inset 2px 2px #404040, inset -2px -2px #d4d0c8;"></div>
<div class="t" style="left:624px;top:487px;color:#000">Ничего не делать</div>
<div style="left:942px;top:484px;width:16px;height:17px;box-shadow: inset -1px -1px #404040, inset 1px 1px #d4d0c8, inset -2px -2px #808080, inset 2px 2px #ffffff; background:#d4d0c8;"></div>
<svg style="position:absolute;left:942px;top:484px" width="16" height="17"><path d="M4 6h7v1h-7zM5 7h5v1h-5zM6 8h3v1h-3zM7 9h1v1h-1z" fill="#000" shape-rendering="crispEdges"/></svg>
<div style="left:610px;top:520px;width:360px;height:26px;border-top:1px solid #fff;border-left:1px solid #fff;border-bottom:1px solid #808080;border-right:1px solid #808080"></div>
<svg style="position:absolute;left:662px;top:525px" width="18" height="17" viewBox="0 0 18 17">
<defs><linearGradient id="dg" x1="0" y1="0" x2="0" y2="1"><stop offset="0" stop-color="#ffffff"/><stop offset="1" stop-color="#c8c8c8"/></linearGradient></defs>
<path d="M1.5 1.5 H9.5 L12.5 4.5 V14.5 H1.5 Z" fill="url(#dg)" stroke="#a0a0a0"/>
<rect x="7" y="7" width="10" height="10" fill="#505050"/>
<rect x="9" y="8" width="6" height="4" fill="#f0f0f0"/>
<rect x="9" y="13" width="5" height="3" fill="#d0d0d0"/>
</svg>
<div class="t dis" style="left:686px;top:528px;letter-spacing:0.13px">Сохранить конфигурацию текущего задания</div>
<div style="left:85px;top:201px;width:490px;height:123px;background:#d4d0c8;box-shadow: inset -1px -1px #404040, inset 1px 1px #d4d0c8, inset -2px -2px #808080, inset 2px 2px #ffffff"></div>
<div style="left:88px;top:204px;width:484px;height:18px;background:linear-gradient(to right,#0a246a,#a6caf0)"></div>
<div class="t b" style="left:90px;top:207px;color:#fff;letter-spacing:0.27px">Behold TV - Внимание (15)</div>
<div style="left:554px;top:206px;width:16px;height:14px;box-shadow: inset -1px -1px #404040, inset 1px 1px #ffffff, inset -2px -2px #808080; background:#d4d0c8;"></div>
<svg style="position:absolute;left:558px;top:209px" width="10" height="9" shape-rendering="crispEdges"><path d="M0 0h1v1h-1zM1 0h1v1h-1zM6 0h1v1h-1zM7 0h1v1h-1zM1 1h1v1h-1zM2 1h1v1h-1zM5 1h1v1h-1zM6 1h1v1h-1zM2 2h1v1h-1zM3 2h1v1h-1zM4 2h1v1h-1zM5 2h1v1h-1zM3 3h1v1h-1zM4 3h1v1h-1zM2 4h1v1h-1zM3 4h1v1h-1zM4 4h1v1h-1zM5 4h1v1h-1zM1 5h1v1h-1zM2 5h1v1h-1zM5 5h1v1h-1zM6 5h1v1h-1zM0 6h1v1h-1zM1 6h1v1h-1zM6 6h1v1h-1zM7 6h1v1h-1z" fill="#fff" transform="translate(1 1)"/><path d="M0 0h1v1h-1zM1 0h1v1h-1zM6 0h1v1h-1zM7 0h1v1h-1zM1 1h1v1h-1zM2 1h1v1h-1zM5 1h1v1h-1zM6 1h1v1h-1zM2 2h1v1h-1zM3 2h1v1h-1zM4 2h1v1h-1zM5 2h1v1h-1zM3 3h1v1h-1zM4 3h1v1h-1zM2 4h1v1h-1zM3 4h1v1h-1zM4 4h1v1h-1zM5 4h1v1h-1zM1 5h1v1h-1zM2 5h1v1h-1zM5 5h1v1h-1zM6 5h1v1h-1zM0 6h1v1h-1zM1 6h1v1h-1zM6 6h1v1h-1zM7 6h1v1h-1z" fill="#808080"/></svg>
<svg style="position:absolute;left:104px;top:239px" width="34" height="34" viewBox="0 0 34 34">
<defs><radialGradient id="qg" cx="0.4" cy="0.35" r="0.7"><stop offset="0" stop-color="#ffffff"/><stop offset="0.55" stop-color="#dceaf8"/><stop offset="1" stop-color="#98bce4"/></radialGradient></defs>
<path d="M17 1.5 C26 1.5 32.5 7 32.5 14 C32.5 20.5 27 25.5 20.5 26.3 L20 32.5 L15 26.5 C8 26 1.5 21 1.5 14 C1.5 7 8 1.5 17 1.5 Z" fill="rgba(60,60,70,0.35)" transform="translate(1 1)"/>
<path d="M17 1.5 C26 1.5 32.5 7 32.5 14 C32.5 20.5 27 25.5 20.5 26.3 L20 32 L15 26.5 C8 26 1.5 21 1.5 14 C1.5 7 8 1.5 17 1.5 Z" fill="url(#qg)" stroke="#a8c0dc" stroke-width="1"/>
<path d="M12.5 9.5 Q13 5.5 17 5.5 Q22 5.5 21.5 10 Q21 13 18 14.5 L17.5 18 H15.5 L15.5 14 Q18 12 18 9.5 Q18 7.5 16.5 7.5 Q15 7.5 15 10 Z" fill="#1a3a9a"/>
<circle cx="16.5" cy="21.5" r="2" fill="#1a3a9a"/>
</svg>
<div class="t" style="left:150px;top:235px;">До старта следующего задания планировщика осталось менее 3 минут!</div>
<div class="t" style="left:150px;top:251px;letter-spacing:0.07px">Ближайшее задание: 'X-factor', старт в 30.10.16 - 18:50, стоп в 31.10.16 - 03:00</div>
<div class="t" style="left:150px;top:266px;">Отменить переход Windows в спящий(ждущий) режим?</div>
<div style="left:247px;top:287px;width:75px;height:25px;background:#000"></div>
<div style="left:248px;top:288px;width:73px;height:23px;box-shadow: inset -1px -1px #404040, inset 1px 1px #ffffff, inset -2px -2px #808080; background:#d4d0c8;"></div>
<div class="t " style="left:247px;top:293px;width:75px;text-align:center">Да</div>
<div style="left:337px;top:287px;width:75px;height:25px;box-shadow: inset -1px -1px #404040, inset 1px 1px #ffffff, inset -2px -2px #808080; background:#d4d0c8;"></div>
<div class="t " style="left:337px;top:293px;width:75px;text-align:center">Нет</div></body></html>
